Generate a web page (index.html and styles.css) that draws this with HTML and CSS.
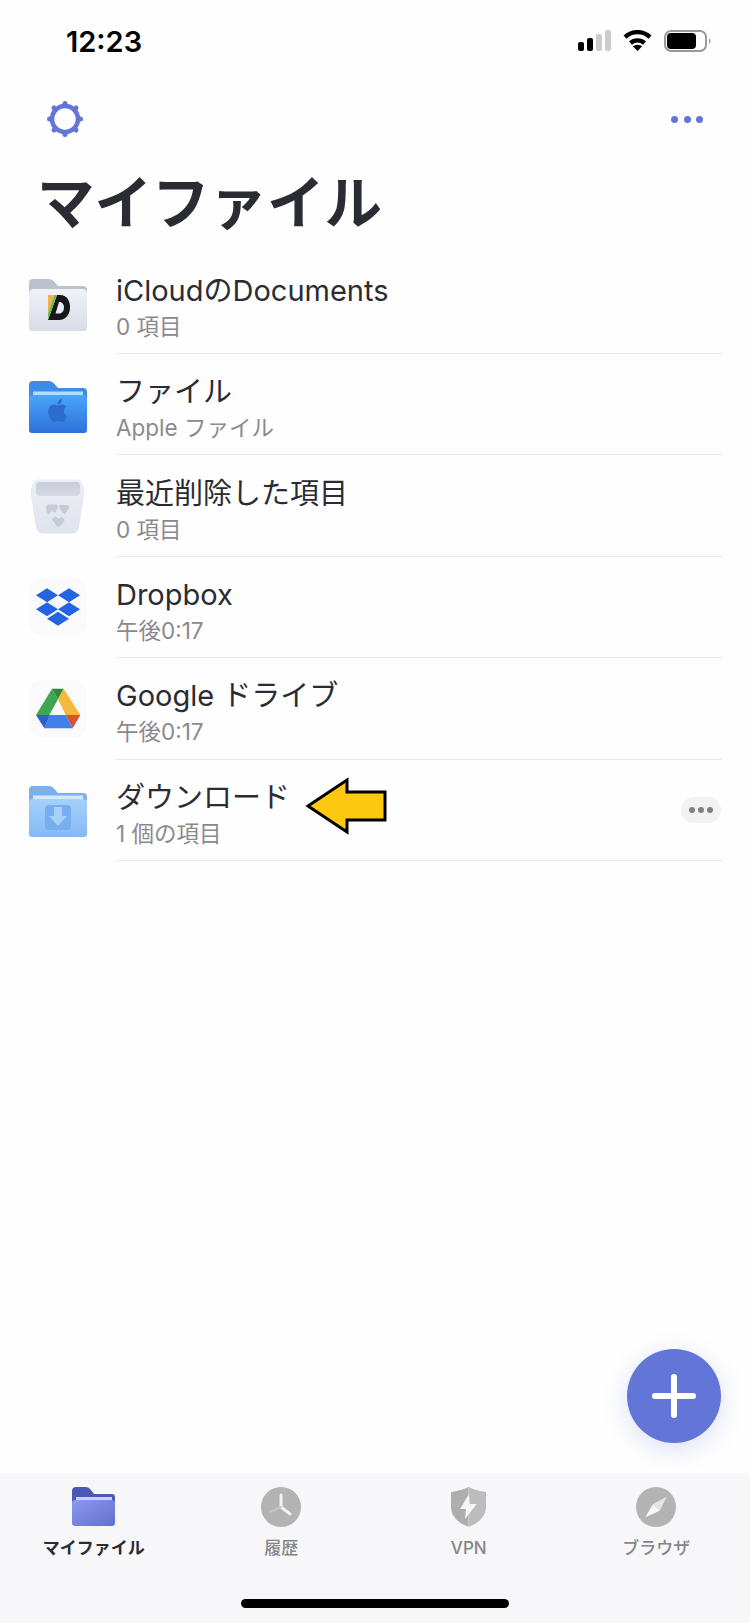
FILE: index.html
```html
<!DOCTYPE html>
<html lang="ja">
<head>
  <meta charset="UTF-8">
  <title>マイファイル</title>
  <link rel="stylesheet" href="styles.css">
</head>
<body>
  <div class="phone">
    <div class="status">
      <span class="time">12:23</span>
      <svg class="status-icons" width="134" height="22" viewBox="0 0 134 22">
        <rect x="0" y="12" width="6" height="9" rx="2" fill="#000"/>
        <rect x="9" y="8" width="6" height="13" rx="2" fill="#000"/>
        <rect x="18" y="4" width="6" height="17" rx="2" fill="#ccc"/>
        <rect x="27" y="0" width="6" height="21" rx="2" fill="#ccc"/>
        <g fill="none" stroke="#000" stroke-width="4.4">
          <path d="M47 7.2A18 18 0 0 1 72 7.2"/>
          <path d="M52.5 13A10.5 10.5 0 0 1 66.5 13"/>
        </g>
        <path d="M59.5 21L54.8 16.3Q59.5 13.2 64.2 16.3Z" fill="#000"/>
        <rect x="87" y="1" width="41" height="20" rx="6" fill="none" stroke="#999" stroke-width="2"/>
        <rect x="89" y="3" width="29" height="16" rx="4" fill="#000"/>
        <path d="M131 8Q134 11 131 14Z" fill="#999"/>
      </svg>
    </div>

    <div class="toolbar">
      <svg width="40" height="40" viewBox="0 0 40 40">
        <g fill="none" stroke="#6475d8" stroke-linecap="round">
          <circle cx="20" cy="20" r="13" stroke-width="4.5"/>
          <path stroke-width="5" d="M20 4.5V6M20 34V35.5M4.5 20H6M34 20H35.5M9 9L10.1 10.1M29.9 29.9L31 31M31 9L29.9 10.1M10.1 29.9L9 31"/>
        </g>
      </svg>
      <div class="dots">
        <span></span><span></span><span></span>
      </div>
    </div>

    <h1 class="title">マイファイル</h1>

    <ul class="list">
      <li class="row">
        <svg class="row-icon" width="58" height="58" viewBox="0 0 58 58">
          <defs>
            <linearGradient id="grayFront" x1="0" y1="0" x2="0" y2="1">
              <stop offset="0" stop-color="#f0f2f7"/>
              <stop offset="1" stop-color="#d8dce6"/>
            </linearGradient>
          </defs>
          <path d="M0 9Q0 5 4 5H20Q23 5 25 7.5L29 12H54Q58 12 58 16V26H0Z" fill="#bcc2cd"/>
          <path d="M0 20Q0 15 5 15H53Q58 15 58 20V54Q58 57 55 57H3Q0 57 0 54Z" fill="url(#grayFront)"/>
          <path d="M19 46L28 21H31C38 21 41 27 41 33.5C41 40 37 46 30 46Z" fill="#17181c"/>
          <path d="M30 28C33 28 35 30 35 33.5C35 37 33 39.5 30 39.5H26.5Z" fill="#e8ebf1"/>
          <path d="M19 21H25.5L19 39Z" fill="#f3b04e"/>
          <path d="M25.5 21H28L19 46V39Z" fill="#6cc04a"/>
        </svg>
        <div class="row-body">
          <div class="row-text">
            <div class="row-name">iCloudのDocuments</div>
            <div class="row-sub">0 項目</div>
          </div>
        </div>
      </li>

      <li class="row">
        <svg class="row-icon" width="58" height="58" viewBox="0 0 58 58">
          <defs>
            <linearGradient id="blueFront" x1="0" y1="0" x2="0" y2="1">
              <stop offset="0" stop-color="#4aa6f8"/>
              <stop offset="1" stop-color="#2e6fdc"/>
            </linearGradient>
          </defs>
          <path d="M0 9Q0 5 4 5H20Q23 5 25 7.5L29 12H54Q58 12 58 16V26H0Z" fill="#3d8cea"/>
          <rect x="4" y="15.5" width="50" height="6" fill="#b5dcfb"/>
          <path d="M0 23Q0 19 4 19H54Q58 19 58 23V54Q58 57 55 57H3Q0 57 0 54Z" fill="url(#blueFront)"/>
          <g transform="translate(17 23) scale(.96)">
            <path d="M12.152 6.896c-.948 0-2.415-1.078-3.96-1.04-2.04.027-3.91 1.183-4.961 3.014-2.117 3.675-.546 9.103 1.519 12.09 1.013 1.454 2.208 3.09 3.792 3.039 1.52-.065 2.09-.987 3.935-.987 1.831 0 2.35.987 3.96.948 1.637-.026 2.676-1.48 3.676-2.948 1.156-1.688 1.636-3.325 1.662-3.415-.039-.013-3.182-1.221-3.22-4.857-.026-3.04 2.48-4.494 2.597-4.559-1.429-2.09-3.623-2.324-4.39-2.376-2-.156-3.675 1.09-4.61 1.09zM15.53 3.83c.843-1.012 1.4-2.427 1.245-3.83-1.207.052-2.662.805-3.532 1.818-.78.896-1.454 2.338-1.273 3.714 1.338.104 2.715-.688 3.559-1.701" fill="#2b6cce"/>
          </g>
        </svg>
        <div class="row-body">
          <div class="row-text">
            <div class="row-name">ファイル</div>
            <div class="row-sub">Apple ファイル</div>
          </div>
        </div>
      </li>

      <li class="row">
        <svg class="row-icon" width="58" height="58" viewBox="0 0 58 58">
          <defs>
            <linearGradient id="trashBody" x1="0" y1="0" x2="0" y2="1">
              <stop offset="0" stop-color="#eceef4"/>
              <stop offset="1" stop-color="#dfe3ec"/>
            </linearGradient>
            <linearGradient id="trashInner" x1="0" y1="0" x2="0" y2="1">
              <stop offset="0" stop-color="#c6ccd9"/>
              <stop offset="1" stop-color="#d6dae4"/>
            </linearGradient>
          </defs>
          <path d="M8 2.5H49Q52 2.5 53 5L55 12Q55.5 15 55 19L50 50Q49 56.5 43 56.5H14Q8 56.5 7 50L2 19Q1.5 15 2 12L4 5Q5 2.5 8 2.5Z" fill="url(#trashBody)"/>
          <path d="M11 5H47Q51 5 51 9V15Q51 19 47 19H11Q7 19 7 15V9Q7 5 11 5Z" fill="url(#trashInner)"/>
          <g fill="#c6cbd6">
            <path d="M19 27.5H27Q29.5 28 29 30L26.5 36L23 33.5L20 37.5Q17 36 17 31Q17 28 19 27.5Z"/>
            <path d="M31 28H37Q40.5 28 40 31L36 37.5L33 35L30 30Q30 28 31 28Z"/>
            <path d="M23 42L26.5 39.5L29.5 41.5L33 40L36 43L31 49.5H28Z"/>
          </g>
        </svg>
        <div class="row-body">
          <div class="row-text">
            <div class="row-name">最近削除した項目</div>
            <div class="row-sub">0 項目</div>
          </div>
        </div>
      </li>

      <li class="row">
        <div class="row-icon tile">
          <svg width="44" height="40" viewBox="0 1.5 24 21">
            <path d="M6 1.807L0 5.629l6 3.822 6.001-3.822L6 1.807zM18 1.807l-6 3.822 6 3.822 6-3.822-6-3.822zM0 13.274l6 3.822 6.001-3.822L6 9.452l-6 3.822zM18 9.452l-6 3.822 6 3.822 6-3.822-6-3.822zM6 18.371l6.001 3.822 6-3.822-6-3.822L6 18.371z" fill="#2563e0"/>
          </svg>
        </div>
        <div class="row-body">
          <div class="row-text">
            <div class="row-name">Dropbox</div>
            <div class="row-sub">午後0:17</div>
          </div>
        </div>
      </li>

      <li class="row">
        <div class="row-icon tile">
          <svg width="46" height="41" viewBox="47 44 138 123">
            <path d="M98 46L116 78L90 125H50Z" fill="#3ea650"/>
            <path d="M98 46H133L116 78Z" fill="#2f8a3e"/>
            <path d="M133 46L183 125H139L116 78Z" fill="#f5b93d"/>
            <path d="M139 125H183L160 165Z" fill="#dc5037"/>
            <path d="M92 125H139L160 165H75Z" fill="#3f80ea"/>
            <path d="M50 125H92L75 165Z" fill="#2c62c8"/>
          </svg>
        </div>
        <div class="row-body">
          <div class="row-text">
            <div class="row-name">Google ドライブ</div>
            <div class="row-sub">午後0:17</div>
          </div>
        </div>
      </li>

      <li class="row">
        <svg class="row-icon" width="58" height="58" viewBox="0 0 58 58">
          <defs>
            <linearGradient id="lightFront" x1="0" y1="0" x2="0" y2="1">
              <stop offset="0" stop-color="#a5d0fb"/>
              <stop offset="1" stop-color="#83baf5"/>
            </linearGradient>
          </defs>
          <path d="M0 9Q0 5 4 5H20Q23 5 25 7.5L29 12H54Q58 12 58 16V26H0Z" fill="#7ab0ee"/>
          <rect x="4" y="14.5" width="50" height="6" fill="#d5e9fd"/>
          <path d="M0 22Q0 18 4 18H54Q58 18 58 22V53Q58 56 55 56H3Q0 56 0 53Z" fill="url(#lightFront)"/>
          <rect x="16" y="24" width="26" height="25" rx="4" fill="#77aef0"/>
          <path d="M25 26H33V35H38L29 45L20 35H25Z" fill="#a8d0fa"/>
        </svg>
        <div class="row-body">
          <div class="row-text">
            <div class="row-name">ダウンロード</div>
            <div class="row-sub">1 個の項目</div>
          </div>
          <div class="more-pill">
            <span></span><span></span><span></span>
          </div>
        </div>
      </li>
    </ul>

    <div class="spacer"></div>

    <div class="tabbar">
      <div class="tabs">
        <div class="tab tab-active">
          <svg width="43" height="40" viewBox="0 0 43 40">
            <defs>
              <linearGradient id="tabFront" x1="0" y1="0" x2="1" y2="1">
                <stop offset="0" stop-color="#8d99ee"/>
                <stop offset="1" stop-color="#6270cc"/>
              </linearGradient>
            </defs>
            <path d="M0 4Q0 0 4 0H14Q17 0 19 3L22 7H40Q43 7 43 10V20H0Z" fill="#4a58b4"/>
            <rect x="4" y="10" width="36" height="4" fill="#c9cff7"/>
            <path d="M0 16Q0 13 3 13H40Q43 13 43 16V36Q43 39 40 39H3Q0 39 0 36Z" fill="url(#tabFront)"/>
          </svg>
          <span class="tab-label">マイファイル</span>
        </div>
        <div class="tab">
          <svg width="40" height="40" viewBox="0 0 40 40">
            <circle cx="20" cy="20" r="20" fill="#b3b3b3"/>
            <path d="M20 8V20L29 27" fill="none" stroke="#f2f2f4" stroke-width="3" stroke-linecap="round" stroke-linejoin="round"/>
            <path d="M20 20L9 25" fill="none" stroke="#c6c6c8" stroke-width="2" stroke-linecap="round"/>
          </svg>
          <span class="tab-label">履歴</span>
        </div>
        <div class="tab">
          <svg width="35" height="40" viewBox="0 0 35 40">
            <path d="M17.5 0C11 3 6 4 0 5V20C0 30 8 36 17.5 40Z" fill="#aeaeae"/>
            <path d="M17.5 0C24 3 29 4 35 5V20C35 30 27 36 17.5 40Z" fill="#bcbcbc"/>
            <path d="M18 7L9 22H15L14 32L25.7 17H18.7Z" fill="#f6f6f8"/>
          </svg>
          <span class="tab-label">VPN</span>
        </div>
        <div class="tab">
          <svg width="40" height="40" viewBox="0 0 40 40">
            <circle cx="20" cy="20" r="20" fill="#b3b3b3"/>
            <path d="M30.7 9.7L17 17L23.7 23.7Z" fill="#e4e4e6"/>
            <path d="M9.3 30.3L17 17L23.7 23.7Z" fill="#f8f8fa"/>
          </svg>
          <span class="tab-label">ブラウザ</span>
        </div>
      </div>
      <div class="home-bar"></div>
    </div>

    <!-- annotation arrow from the original screenshot -->
    <svg class="arrow" width="90" height="62" viewBox="0 0 90 62">
      <path d="M5 31L44 5V17H82V45H44V57Z" fill="#fec810" stroke="#000" stroke-width="3"/>
    </svg>

    <div class="fab">
      <svg width="44" height="44" viewBox="0 0 44 44">
        <path d="M22 3V41M3 22H41" stroke="#fff" stroke-width="6" stroke-linecap="round"/>
      </svg>
    </div>
  </div>
</body>
</html>
```

FILE: styles.css
```css
* {
  box-sizing: border-box;
}

body {
  margin: 0;
  background: #fff;
  font-family: "Inter", "Noto Sans CJK JP", sans-serif;
  color: #2b2c33;
}

.phone {
  position: relative;
  display: flex;
  flex-direction: column;
  width: 750px;
  height: 1623px;
  overflow: hidden;
  background: #fefefe;
}

.status {
  display: flex;
  align-items: center;
  justify-content: space-between;
  height: 82px;
  padding: 0 38px 0 66px;
}

.time {
  font-size: 29px;
  font-weight: 600;
  color: #000;
}

.toolbar {
  display: flex;
  align-items: center;
  justify-content: space-between;
  height: 74px;
  padding: 0 47px 0 45px;
}

.dots {
  display: flex;
  gap: 5.5px;
}

.dots span {
  width: 7px;
  height: 7px;
  border-radius: 50%;
  background: #6475d8;
}

.title {
  height: 96.6px;
  margin: 0;
  padding-left: 37px;
  font-size: 57.5px;
  font-weight: 700;
  line-height: 94px;
}

.list {
  margin: 0;
  padding: 0;
  list-style: none;
}

.row {
  display: flex;
  height: 101.4px;
  padding: 0 28px 0 29px;
}

.row-icon {
  flex: none;
  width: 58px;
  height: 58px;
  align-self: center;
}

.tile {
  display: flex;
  align-items: center;
  justify-content: center;
  border-radius: 14px;
  background: #fafafc;
}

.row-body {
  flex: 1;
  display: flex;
  align-items: center;
  justify-content: space-between;
  margin-left: 29px;
  border-bottom: 1px solid #e8e8ea;
}

.row-text {
  padding-top: 10px;
}

.row-name {
  padding-top: 2px;
  font-size: 29px;
  line-height: 36px;
  color: #2b2c33;
}

.row-sub {
  font-size: 22.5px;
  line-height: 36px;
  color: #8a8a8e;
}

.more-pill {
  display: flex;
  align-items: center;
  justify-content: center;
  gap: 3px;
  width: 40px;
  height: 26px;
  margin-right: 1px;
  border-radius: 13px;
  background: #f2f2f3;
}

.more-pill span {
  width: 6px;
  height: 6px;
  border-radius: 50%;
  background: #808084;
}

.spacer {
  flex: 1;
}

.tabbar {
  display: flex;
  flex-direction: column;
  align-items: center;
  height: 150px;
  padding-top: 14px;
  background: #f7f7f9;
}

.tabs {
  display: flex;
  width: 100%;
}

.tab {
  flex: 1;
  display: flex;
  flex-direction: column;
  align-items: center;
}

.tab-label {
  margin-top: 10px;
  font-size: 17px;
  font-weight: 500;
  line-height: 22px;
  color: #85858a;
}

.tab-active .tab-label {
  font-weight: 700;
  color: #2b2c33;
}

.home-bar {
  width: 268px;
  height: 9px;
  margin-top: 40px;
  border-radius: 5px;
  background: #000;
}

.arrow {
  position: absolute;
  left: 303px;
  top: 775px;
}

.fab {
  position: absolute;
  left: 627px;
  top: 1349px;
  display: flex;
  align-items: center;
  justify-content: center;
  width: 94px;
  height: 94px;
  border-radius: 50%;
  background: #6475d8;
  box-shadow: 0 6px 24px rgba(100, 117, 216, .22);
}
```
